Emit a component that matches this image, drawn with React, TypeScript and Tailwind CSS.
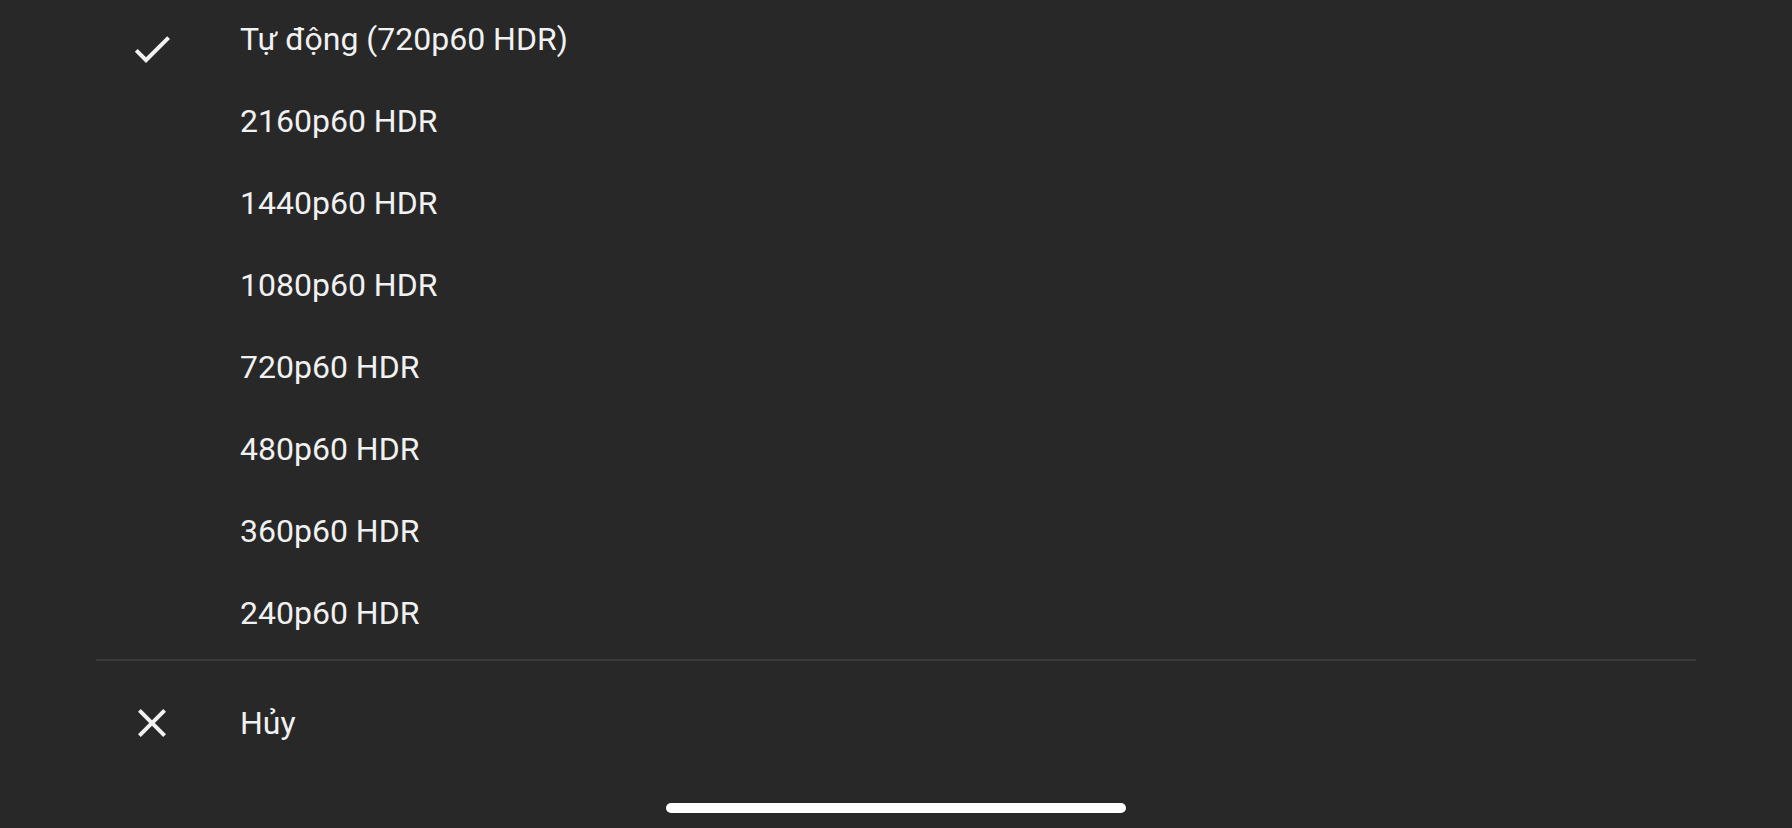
import React from 'react'

// Material-style icons, 24 unit viewBox
function CheckIcon() {
  return (
    <svg viewBox="0 0 24 24" width={48} height={48} fill="#f1f1f1">
      <path d="M9 16.17L4.83 12l-1.42 1.41L9 19 21 7l-1.41-1.41z" />
    </svg>
  )
}

function CloseIcon() {
  return (
    <svg viewBox="0 0 24 24" width={48} height={48} fill="#f1f1f1">
      <path d="M19 6.41L17.59 5 12 10.59 6.41 5 5 6.41 10.59 12 5 17.59 6.41 19 12 13.41 17.59 19 19 17.59 13.41 12z" />
    </svg>
  )
}

const qualities = [
  'Tự động (720p60 HDR)',
  '2160p60 HDR',
  '1440p60 HDR',
  '1080p60 HDR',
  '720p60 HDR',
  '480p60 HDR',
  '360p60 HDR',
  '240p60 HDR',
]

export default function App() {
  return (
    <div
      className="w-full h-screen overflow-hidden bg-[#282828] text-[#f1f1f1] flex flex-col"
      style={{ fontFamily: 'Roboto, "Noto Sans", sans-serif' }}
    >
      {/* ─── Quality list ─────────────────────────────────────────── */}
      <div className="flex flex-col -mt-[2px]">
        {qualities.map((q, i) => (
          <div key={q} className="flex items-center h-[82px] pl-[128px]">
            <div className={`w-[48px] h-[48px] mr-[64px] flex-shrink-0 ${i === 0 ? 'mt-[20px]' : ''}`}>
              {i === 0 && <CheckIcon />}
            </div>
            <span className="text-[32px] leading-none">{q}</span>
          </div>
        ))}
      </div>

      {/* ─── Divider ──────────────────────────────────────────────── */}
      <div className="mx-[96px] mt-[5px] h-[2px] bg-[#3a3a3a]" />

      {/* ─── Cancel ───────────────────────────────────────────────── */}
      <div className="flex items-center h-[124px] pl-[128px]">
        <div className="w-[48px] h-[48px] mr-[64px] flex-shrink-0">
          <CloseIcon />
        </div>
        <span className="text-[32px] leading-none">Hủy</span>
      </div>

      {/* ─── Home indicator ───────────────────────────────────────── */}
      <div className="flex justify-center mt-[18px]">
        <div className="w-[460px] h-[10px] rounded-full bg-white" />
      </div>
    </div>
  )
}
